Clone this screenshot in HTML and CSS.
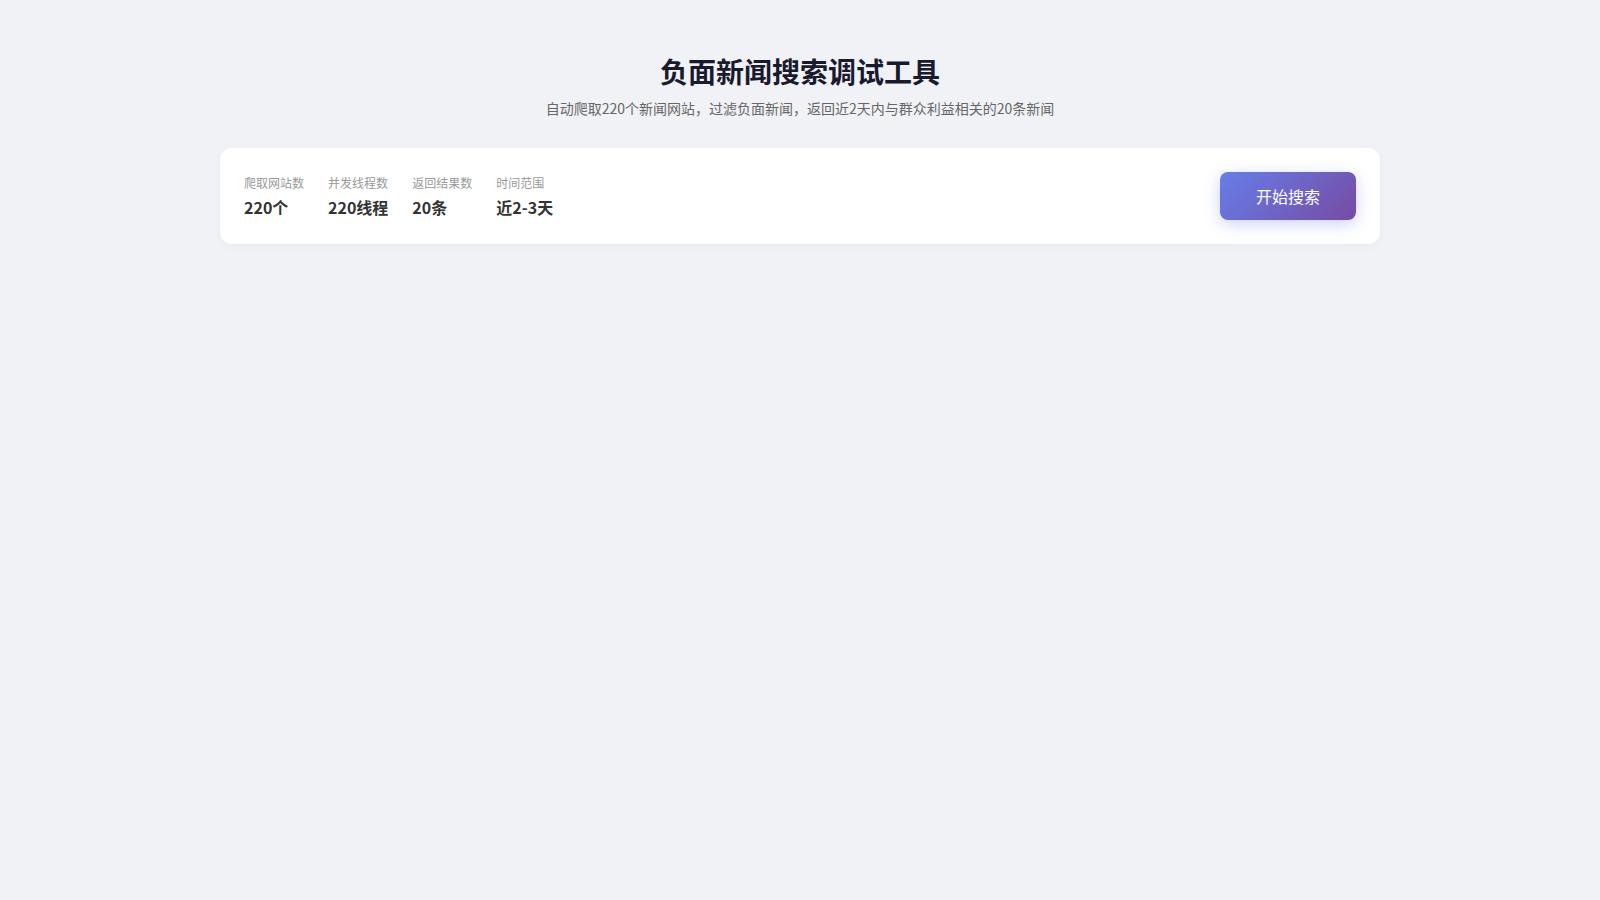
FILE: index.html
```html
<!DOCTYPE html>
<html lang="zh-CN">
<head>
<meta charset="utf-8">
<title>负面新闻搜索调试工具</title>
<link rel="stylesheet" href="styles.css">
</head>
<body>
<div class="page">
  <header class="header">
    <h1 class="title">负面新闻搜索调试工具</h1>
    <p class="subtitle">自动爬取220个新闻网站，过滤负面新闻，返回近2天内与群众利益相关的20条新闻</p>
  </header>
  <section class="card">
    <div class="stats">
      <div class="stat">
        <div class="stat-label">爬取网站数</div>
        <div class="stat-value">220个</div>
      </div>
      <div class="stat">
        <div class="stat-label">并发线程数</div>
        <div class="stat-value">220线程</div>
      </div>
      <div class="stat">
        <div class="stat-label">返回结果数</div>
        <div class="stat-value">20条</div>
      </div>
      <div class="stat">
        <div class="stat-label">时间范围</div>
        <div class="stat-value">近2-3天</div>
      </div>
    </div>
    <button class="btn-search" type="button">开始搜索</button>
  </section>
</div>
</body>
</html>
```

FILE: styles.css
```css
* { box-sizing: border-box; }
html, body { margin: 0; padding: 0; }
body {
  background: #f0f2f5;
  font-family: "Noto Sans CJK SC", "Noto Sans", sans-serif;
  color: #333;
  min-height: 900px;
}
.page {
  width: 1160px;
  margin: 0 auto;
  padding-top: 51px;
}
.header { text-align: center; }
.title {
  margin: 0;
  font-size: 28px;
  line-height: 40px;
  font-weight: 700;
  color: #1a1a2e;
}
.subtitle {
  margin: 7px 0 0;
  font-size: 14px;
  line-height: 20px;
  color: #666;
}
.card {
  margin-top: 30px;
  background: #fff;
  border-radius: 12px;
  padding: 24px;
  display: flex;
  align-items: center;
  justify-content: space-between;
  box-shadow: 0 2px 8px rgba(0, 0, 0, 0.04);
}
.stats {
  display: flex;
  gap: 24px;
}
.stat-label {
  font-size: 12px;
  line-height: 18px;
  color: #999;
  margin-bottom: 4px;
}
.stat-value {
  font-size: 16px;
  line-height: 22px;
  font-weight: 700;
  color: #333;
}
.btn-search {
  width: 136px;
  height: 48px;
  border: none;
  border-radius: 8px;
  background: linear-gradient(135deg, #667eea 0%, #764ba2 100%);
  color: #fff;
  font-family: inherit;
  font-size: 16px;
  box-shadow: 0 4px 15px rgba(102, 126, 234, 0.35);
  cursor: pointer;
}
```
